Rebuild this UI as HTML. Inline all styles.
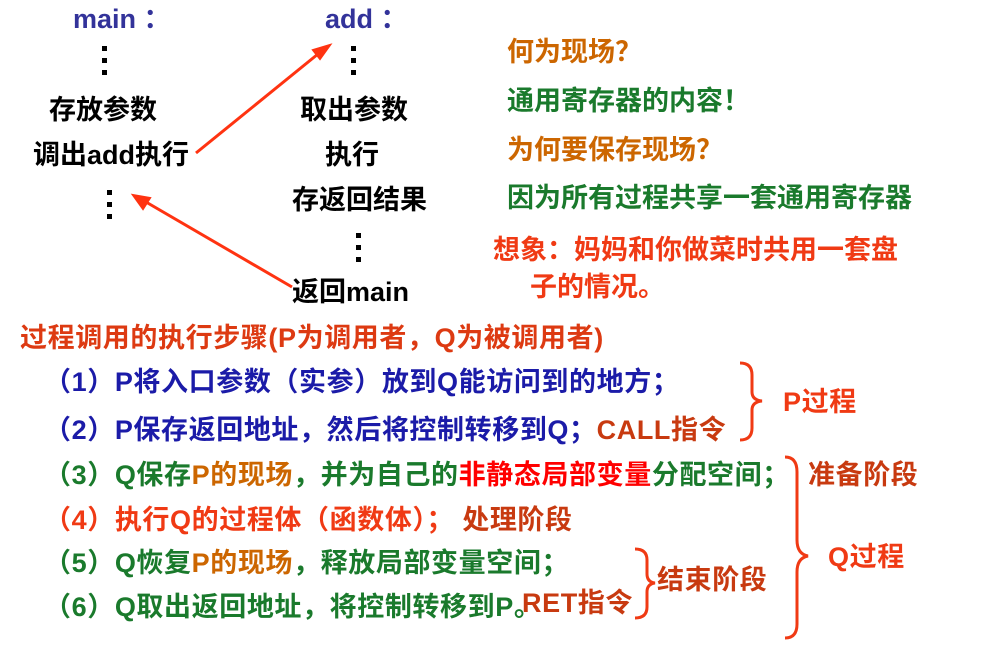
<!DOCTYPE html>
<html><head><meta charset="utf-8"><style>
body{margin:0;width:995px;height:651px;background:#fff;position:relative;overflow:hidden;font-family:"Liberation Sans","Noto Sans CJK SC",sans-serif;font-weight:bold;}
.t{position:absolute;white-space:nowrap;font-size:27px;line-height:30px;}
.b{font-size:27px;letter-spacing:0.6px;}
.d{position:absolute;width:5px;height:5px;background:#000;}
.bl{color:#1b1ba8}.gr{color:#1a7a2c}.or{color:#cc6600}.rd{color:#ff0000}.ro{color:#f03a14}.br{color:#c83a10}
</style></head><body>
<div class="t" style="left:73px;top:4px;color:#33339a;font-size:27px">main ：</div>
<div class="t" style="left:325px;top:4px;color:#33339a;font-size:27px">add ：</div>
<div class="d" style="left:102px;top:46px"></div><div class="d" style="left:102px;top:58px"></div><div class="d" style="left:102px;top:70px"></div>
<div class="d" style="left:351px;top:46px"></div><div class="d" style="left:351px;top:58px"></div><div class="d" style="left:351px;top:70px"></div>
<div class="d" style="left:107px;top:190px"></div><div class="d" style="left:107px;top:202px"></div><div class="d" style="left:107px;top:214px"></div>
<div class="d" style="left:356px;top:233px"></div><div class="d" style="left:356px;top:245px"></div><div class="d" style="left:356px;top:257px"></div>
<div class="t" style="left:49px;top:95px">存放参数</div>
<div class="t" style="left:33px;top:140px">调出add执行</div>
<div class="t" style="left:300px;top:95px">取出参数</div>
<div class="t" style="left:325px;top:140px">执行</div>
<div class="t" style="left:292px;top:185px">存返回结果</div>
<div class="t" style="left:292px;top:277px">返回main</div>
<svg style="position:absolute;left:0;top:0" width="995" height="651">
<g stroke="#ff3311" stroke-width="3" fill="#ff3311">
<line x1="196" y1="153" x2="318" y2="54"/><polygon points="330,45 313,50 320,59" stroke-width="2"/>
<line x1="292" y1="287" x2="146" y2="202"/><polygon points="133,195 143,209 150,198" stroke-width="2"/>
</g>
<g stroke="#f03a14" stroke-width="3" fill="none">
<path d="M740,363 Q752,363 752,375 L752,392 Q752,400 762,401 Q752,402 752,410 L752,428 Q752,440 740,440"/>
<path d="M785,457 Q797,457 797,472 L797,540 Q797,554 808,556 Q797,558 797,572 L797,624 Q797,638 785,638"/>
<path d="M635,549 Q647,549 647,560 L647,574 Q647,582 655,583 Q647,584 647,592 L647,607 Q647,618 635,618"/>
</g></svg>
<div class="t or" style="left:507px;top:37px">何为现场？</div>
<div class="t gr" style="left:507px;top:86px">通用寄存器的内容！</div>
<div class="t or" style="left:507px;top:135px">为何要保存现场？</div>
<div class="t gr" style="left:507px;top:183px">因为所有过程共享一套通用寄存器</div>
<div class="t ro" style="left:493px;top:235px">想象：妈妈和你做菜时共用一套盘</div>
<div class="t ro" style="left:530px;top:272px">子的情况。</div>
<div class="t b" style="left:20px;top:323px;color:#dd3a12">过程调用的执行步骤(P为调用者，Q为被调用者)</div>
<div class="t b bl" style="left:44px;top:367px">（1）P将入口参数（实参）放到Q能访问到的地方；</div>
<div class="t b bl" style="left:44px;top:415px">（2）P保存返回地址，然后将控制转移到Q；<span class="br">CALL指令</span></div>
<div class="t b gr" style="left:44px;top:460px">（3）Q保存<span class="or">P的现场</span>，并为自己的<span class="rd">非静态局部变量</span>分配空间；</div>
<div class="t b ro" style="left:44px;top:505px">（4）执行Q的过程体（函数体）； <span class="br">处理阶段</span></div>
<div class="t b gr" style="left:44px;top:548px">（5）Q恢复<span class="or">P的现场</span>，释放局部变量空间；</div>
<div class="t b gr" style="left:44px;top:592px">（6）Q取出返回地址，将控制转移到P。</div>
<div class="t b br" style="left:522px;top:588px">RET指令</div>
<div class="t b ro" style="left:783px;top:387px">P过程</div>
<div class="t b br" style="left:808px;top:460px">准备阶段</div>
<div class="t b ro" style="left:828px;top:542px">Q过程</div>
<div class="t b br" style="left:657px;top:565px">结束阶段</div>
</body></html>
